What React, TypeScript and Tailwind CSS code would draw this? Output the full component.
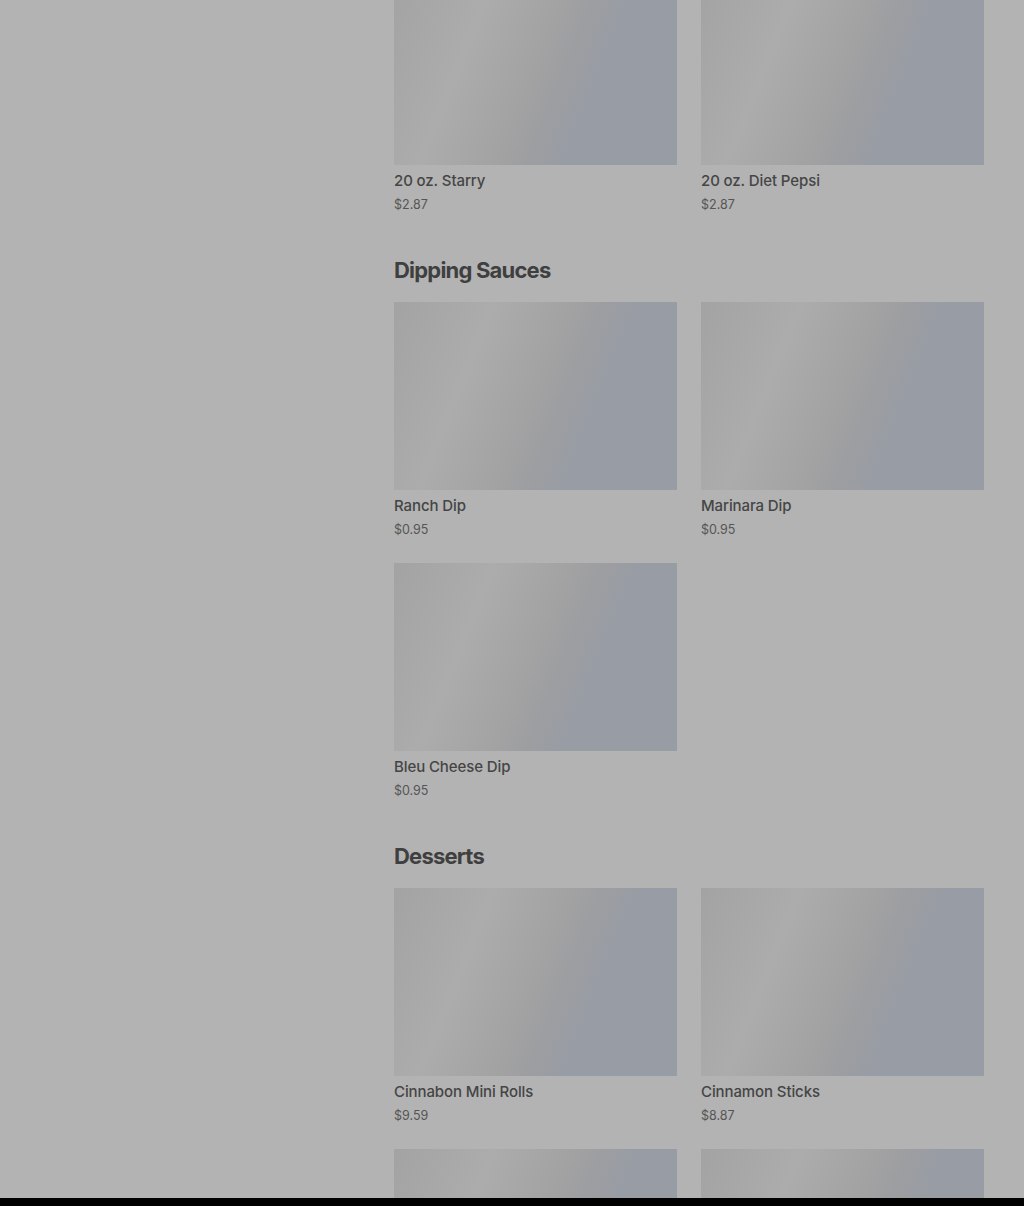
import React from "react";

interface Item {
  name: string;
  price: string;
}

interface Section {
  title?: string;
  items: Item[];
}

const sections: Section[] = [
  {
    items: [
      { name: "20 oz. Starry", price: "$2.87" },
      { name: "20 oz. Diet Pepsi", price: "$2.87" },
    ],
  },
  {
    title: "Dipping Sauces",
    items: [
      { name: "Ranch Dip", price: "$0.95" },
      { name: "Marinara Dip", price: "$0.95" },
      { name: "Bleu Cheese Dip", price: "$0.95" },
    ],
  },
  {
    title: "Desserts",
    items: [
      { name: "Cinnabon Mini Rolls", price: "$9.59" },
      { name: "Cinnamon Sticks", price: "$8.87" },
      { name: "", price: "" },
      { name: "", price: "" },
    ],
  },
];

function ItemCard({ item }: { item: Item }) {
  return (
    <div className="flex flex-col">
      <div className="h-[188px] w-full bg-[linear-gradient(112deg,#a3a3a3_0%,#acacac_28%,#a3a3a3_48%,#9d9ea1_58%,#989ca4_68%,#989ca4_100%)]"></div>
      <div className="mt-[6px] text-[15px] leading-[20px] font-medium text-[#454545] tracking-[-0.1px]">
        {item.name}
      </div>
      <div className="mt-[5px] text-[12.5px] leading-[18px] text-[#555555]">
        {item.price}
      </div>
    </div>
  );
}

export default function App() {
  return (
    <div
      className="h-[1206px] w-full overflow-hidden bg-black"
      style={{ fontFamily: "Inter, 'Noto Sans', sans-serif" }}
    >
      <div className="h-[1198px] w-full overflow-hidden bg-[#b3b3b3]">
        <div className="flex">
          <div className="w-[394px] shrink-0"></div>
          <main className="flex-1 pr-[40px] -mt-[23px]">
            {sections.map((section, idx) => (
              <section key={idx} className={idx > 0 ? "mt-[42px]" : ""}>
                {section.title && (
                  <h2 className="mb-[18px] text-[22px] leading-[28px] font-bold tracking-[-0.8px] text-[#3f3f3f]">
                    {section.title}
                  </h2>
                )}
                <div className="grid grid-cols-2 gap-x-[24px] gap-y-[24px]">
                  {section.items.map((item, i) => (
                    <ItemCard key={i} item={item} />
                  ))}
                </div>
              </section>
            ))}
          </main>
        </div>
      </div>
    </div>
  );
}
